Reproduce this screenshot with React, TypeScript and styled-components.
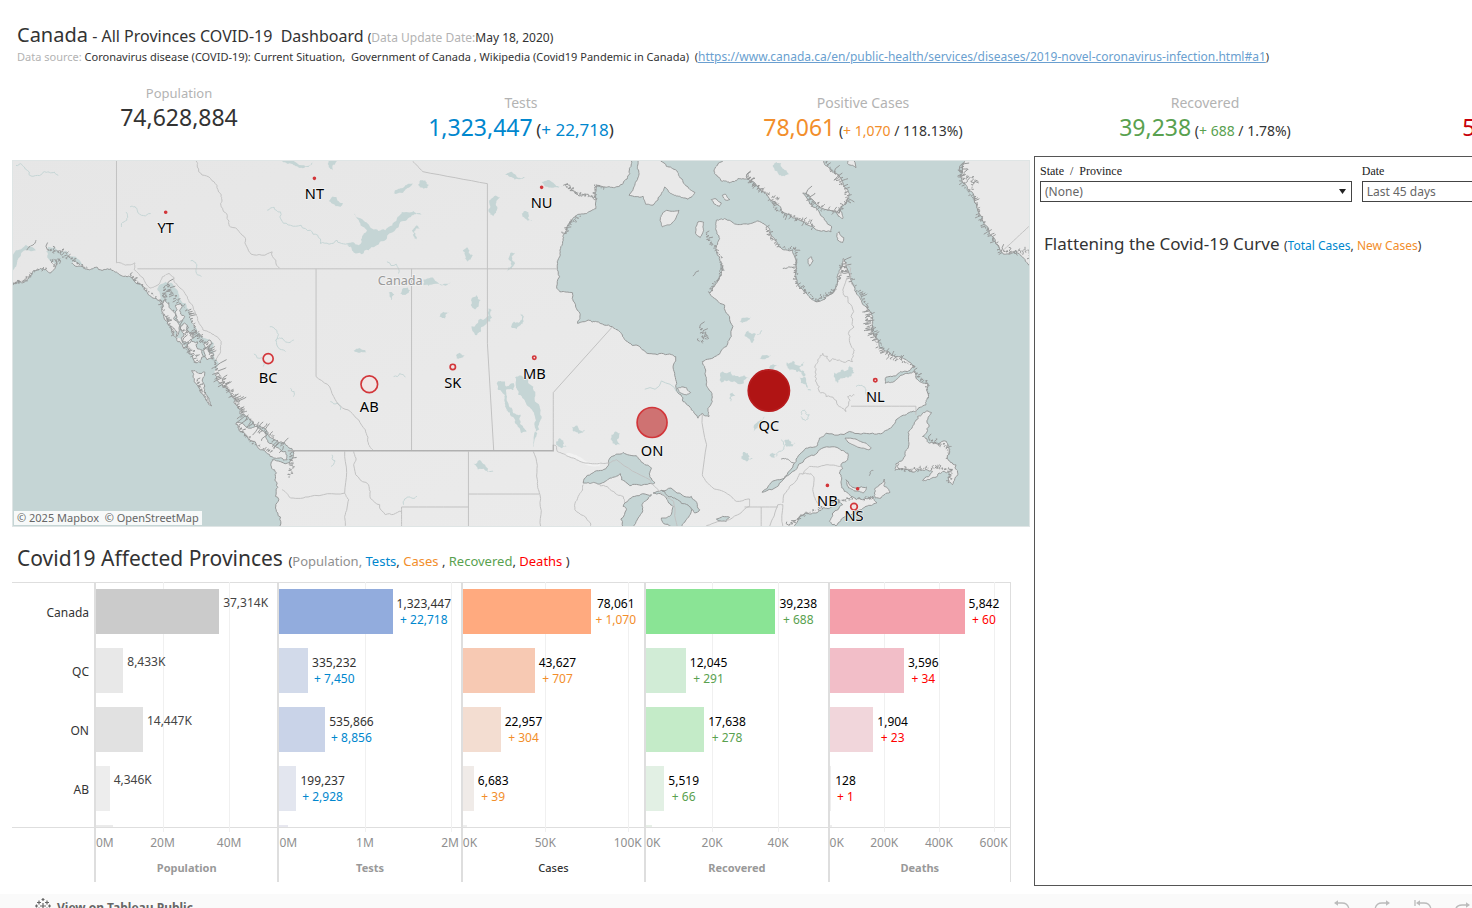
import React from "react";
import styled, { createGlobalStyle, css } from "styled-components";

const GlobalStyle = createGlobalStyle`
  *, *::before, *::after { box-sizing: border-box; }
  body {
    margin: 0;
    background: #fff;
    color: #333;
    font-family: "Noto Sans", "Open Sans", sans-serif;
    font-size: 12px;
  }
  h1, h2, p, dl, dd { margin: 0; font-weight: 400; }
`;

const palette = {
  text: "#333333",
  muted: "#b3b3b3",
  axis: "#8f8f8f",
  blue: "#0087ce",
  orange: "#f28e2b",
  green: "#59a14f",
  crimson: "#c8000a",
  red: "#ff0000",
  line: "#dedede",
  grid: "#f0f0f0",
};

const Page = styled.div`
  display: flex;
  flex-direction: column;
  height: 100vh;
  overflow: hidden;
`;

const Tint = styled.span<{ $color: string }>`
  color: ${(p) => p.$color};
`;

/* ---------- header ---------- */

const Header = styled.header`
  flex: none;
  padding: 24px 17px 0;
  white-space: nowrap;
`;

const Title = styled.h1`
  font-size: 16px;
  line-height: 22px;
  strong { font-size: 20px; font-weight: 400; }
  small { font-size: 12px; }
`;

const Source = styled.p`
  font-size: 11px;
  line-height: 16px;
  white-space: pre;
  a { font-size: 12px; color: #6a9fd0; }
`;

/* ---------- key figures ---------- */

const KpiRow = styled.dl`
  flex: none;
  display: grid;
  grid-template-columns: repeat(5, minmax(342px, 1fr));
  min-height: 62px;
  margin: 18px 8px 11px;
  white-space: nowrap;
`;

const Kpi = styled.div<{ $raised?: boolean }>`
  align-self: ${(p) => (p.$raised ? "start" : "end")};
  text-align: center;
  dt { font-size: ${(p) => (p.$raised ? 13 : 14)}px; line-height: 20px; color: ${palette.muted}; }
  dd { font-size: 14px; line-height: 28px; }
`;

const Figure = styled.span<{ $color: string }>`
  font-size: 23px;
  color: ${(p) => p.$color};
`;

const Medium = styled.span`
  font-size: 17px;
`;

/* ---------- main layout ---------- */

const Main = styled.main`
  flex: none;
  display: grid;
  grid-template-columns: minmax(0, 1018fr) minmax(0, 438fr);
  column-gap: 4px;
  padding-left: 12px;
`;

const Left = styled.div`
  min-width: 0;
  padding-bottom: 4px;
`;

const MapBox = styled.section`
  position: relative;
  margin-top: 4px;
  height: 367px;
  border: 1px solid #dfe5e5;
  overflow: hidden;
  svg { display: block; width: 100%; height: 100%; }
`;

const Credit = styled.div`
  position: absolute;
  left: 1px;
  bottom: 1px;
  padding: 0 3px;
  background: rgba(255, 255, 255, 0.85);
  color: #666;
  font-size: 11px;
  line-height: 14px;
  white-space: pre;
`;

/* ---------- right panel ---------- */

const Panel = styled.section`
  border: 1px solid #555;
  border-right: 0;
  padding: 6px 0 0 5px;
  min-width: 0;
  overflow: hidden;
`;

const Filters = styled.div`
  display: grid;
  grid-template-columns: minmax(0, 311fr) minmax(0, 110fr);
  column-gap: 10px;
`;

const Field = styled.div`
  label {
    display: block;
    font-family: "Liberation Serif", "Times New Roman", serif;
    font-size: 12px;
    line-height: 16px;
    margin-bottom: 2px;
    color: #222;
  }
`;

const control = css`
  display: block;
  width: 100%;
  height: 21px;
  padding: 0 4px;
  border: 1px solid #444;
  border-radius: 0;
  background: #fff;
  color: #666;
  font-family: inherit;
  font-size: 12px;
`;

const SelectWrap = styled.div`
  position: relative;
  svg { position: absolute; right: 6px; top: 8px; pointer-events: none; }
`;

const Select = styled.select`
  ${control}
  appearance: none;
`;

const DateInput = styled.input`
  ${control}
  border-right: 0;
`;

const CurveTitle = styled.h2`
  margin: 30px 4px 0;
  font-size: 17px;
  line-height: 24px;
  white-space: nowrap;
  small { font-size: 12px; }
`;

/* ---------- province chart ---------- */

const ChartTitle = styled.h2`
  margin: 18px 5px 8px;
  font-size: 21px;
  line-height: 26px;
  white-space: pre;
  small { font-size: 13px; }
`;

const Chart = styled.section`
  display: grid;
  grid-template-columns: 82px repeat(5, minmax(0, 1fr));
  margin-right: 19px;
`;

const plotArea = css`
  height: 246px;
  padding-top: 6px;
  border-top: 1px solid ${palette.line};
  border-bottom: 1px solid ${palette.line};
  overflow: hidden;
`;

const Names = styled.div`
  ${plotArea}
  text-align: right;
`;

const Name = styled.div`
  height: 59px;
  padding-right: 5px;
  font-size: 12px;
  line-height: 47px;
`;

const Column = styled.div`
  position: relative;
  border-left: 2px solid ${palette.line};
  &:last-child { border-right: 1px solid ${palette.line}; }
`;

const Plot = styled.div`
  ${plotArea}
`;

const GridLine = styled.i`
  position: absolute;
  top: 0;
  height: 250px;
  border-left: 1px solid ${palette.grid};
`;

const BarRow = styled.div`
  position: relative;
  display: flex;
  height: 59px;
`;

const Bar = styled.div<{ $color: string }>`
  flex: none;
  height: 45px;
  background: ${(p) => p.$color};
`;

const BarLabel = styled.div<{ $color: string; $faint?: boolean }>`
  padding: ${(p) => (p.$faint ? "6px 4px" : "7px 4px")};
  font-size: 12px;
  line-height: 16px;
  text-align: center;
  white-space: nowrap;
  color: ${(p) => p.$color};
`;

const Axis = styled.div`
  position: relative;
  height: 54px;
  padding-top: 30px;
  text-align: center;
  color: ${palette.axis};
`;

const Tick = styled.span<{ $side: "start" | "mid" | "end" }>`
  position: absolute;
  top: 6px;
  line-height: 18px;
  white-space: nowrap;
  transform: translateX(${(p) => (p.$side === "mid" ? "-50%" : p.$side === "end" ? "-100%" : "0")});
`;

const AxisTitle = styled.div<{ $plain?: boolean }>`
  font-size: 11px;
  line-height: 20px;
  font-weight: ${(p) => (p.$plain ? 500 : 700)};
  color: ${(p) => (p.$plain ? palette.text : "#999")};
`;

/* ---------- footer ---------- */

const Footer = styled.footer`
  flex: none;
  display: flex;
  justify-content: space-between;
  align-items: flex-start;
  height: 40px;
  margin-top: 8px;
  padding: 4px 0 0 35px;
  background: #fafafa;
`;

const FooterLink = styled.a`
  display: flex;
  gap: 6px;
  align-items: flex-start;
  color: #666;
  font-size: 12px;
  font-weight: 700;
  line-height: 20px;
  text-decoration: none;
`;

const Tools = styled.div`
  display: flex;
  gap: 20px;
`;

const ToolButton = styled.button`
  width: 20px;
  height: 18px;
  padding: 0;
  border: 0;
  background: none;
  color: #bbb;
  svg { display: block; }
`;

/* ---------- map drawing ---------- */

type Pt = [number, number];

const parse = (s: string): Pt[] =>
  s.trim().split(/\s+/).map((p) => p.split(",").map(Number) as Pt);

/* Adds natural roughness to a polyline by repeated midpoint displacement. */
function rough(points: string, amount: number, closed = true, depth = 3): string {
  let seed = 7;
  const rnd = () => {
    seed = (seed * 16807) % 2147483647;
    return seed / 2147483647 - 0.5;
  };
  let pts = parse(points);
  if (closed) pts = [...pts, pts[0]];
  for (let d = 0; d < depth; d++) {
    const next: Pt[] = [pts[0]];
    for (let i = 1; i < pts.length; i++) {
      const [ax, ay] = pts[i - 1];
      const [bx, by] = pts[i];
      const len = Math.hypot(bx - ax, by - ay);
      if (len > 5 && len < 220) {
        const k = rnd() * amount;
        next.push([(ax + bx) / 2 - (by - ay) * k, (ay + by) / 2 + (bx - ax) * k]);
      }
      next.push([bx, by]);
    }
    pts = next;
  }
  return "M" + pts.map((p) => p.map((v) => Math.round(v)).join(",")).join("L") + (closed ? "Z" : "");
}

/* Short inlets branching off a coast. */
function fjords(points: string, length: number, step = 4): string {
  let seed = 31;
  const rnd = () => {
    seed = (seed * 16807) % 2147483647;
    return seed / 2147483647;
  };
  const pts = parse(points);
  let d = "";
  for (let i = 1; i < pts.length; i++) {
    const [ax, ay] = pts[i - 1];
    const [bx, by] = pts[i];
    const len = Math.hypot(bx - ax, by - ay) || 1;
    const nx = -(by - ay) / len;
    const ny = (bx - ax) / len;
    for (let t = 0; t < len; t += step) {
      const x = ax + ((bx - ax) * t) / len;
      const y = ay + ((by - ay) * t) / len;
      const r = (rnd() - 0.5) * 2;
      const l = r * Math.abs(r) * length * 1.3;
      const w = (rnd() - 0.5) * 14;
      d += `M${x | 0},${y | 0}l${(nx * l * 0.6 + w) | 0},${(ny * l * 0.6) | 0}l${(nx * l * 0.4 - w) | 0},${(ny * l * 0.4 + w / 2) | 0}`;
    }
  }
  return d;
}

const pacific =
  "36,405 66,398 85,380 103,362 135,358 150,368 170,345 205,335 245,350 262,358 290,352 330,356 350,368 383,378 400,392 430,412 440,428 470,450 485,480 500,515 525,560 540,578 560,600 580,637 605,640 640,635 648,680 680,715 705,745 712,775 735,800 760,825 800,845 820,870 860,888 880,910 868,938 815,930 812,940 822,960 830,1000 835,1050 832,1090 828,1140 20,1140 20,405";
const northEast =
  "1895,10 1895,40 1890,70 1870,100 1845,112 1810,110 1790,105 1785,130 1790,148 1788,175 1760,190 1730,195 1710,215 1700,240 1690,255 1690,270 1680,310 1672,350 1670,410 1680,425 1718,428 1725,460 1740,490 1733,520 1765,510 1790,515 1838,530 1860,545 1878,572 1920,590 1960,612 2010,612 2028,620 2025,670 2030,720 2050,755 2075,780 2095,805 2108,790 2128,800 2125,775 2138,755 2128,720 2120,690 2118,660 2108,635 2150,618 2180,590 2195,560 2190,500 2175,465 2130,430 2150,400 2165,365 2170,355 2160,320 2150,300 2160,265 2148,235 2150,210 2175,205 2210,222 2245,222 2275,212 2310,235 2325,265 2340,290 2380,300 2390,330 2393,390 2398,410 2430,440 2450,455 2480,440 2500,430 2515,390 2520,360 2530,345 2532,325 2545,360 2560,400 2580,440 2610,480 2620,520 2622,550 2640,590 2690,620 2745,650 2715,664 2695,672 2660,682 2658,700 2680,697 2710,675 2745,665 2750,685 2785,700 2788,740 2780,765 2750,785 2720,795 2690,810 2665,840 2620,850 2550,845 2480,850 2460,865 2455,885 2420,895 2390,935 2360,980 2310,1005 2288,1028 2340,1000 2380,965 2420,925 2460,900 2520,897 2545,910 2540,935 2525,945 2530,955 2520,970 2525,1000 2535,1025 2555,1040 2590,1050 2620,1042 2632,1060 2600,1070 2570,1085 2540,1100 2510,1128 2490,1115 2500,1090 2530,1065 2520,1058 2500,1070 2470,1075 2440,1090 2400,1100 2370,1140 3110,1140 3110,10";

const islands: [string, number][] = [
  ["705,822 730,825 760,832 790,845 800,870 820,888 855,905 860,930 850,932 820,925 780,900 740,860 715,840", 0.5],
  ["573,662 590,668 612,666 605,690 610,715 625,745 633,768 615,750 600,728 580,695", 0.4],
  ["480,460 505,458 520,480 522,510 528,560 510,530 495,500", 0.7],
  ["525,465 545,470 552,500 535,518 525,490", 0.7],
  ["540,530 560,525 580,550 570,575 545,575", 0.7],
  ["560,585 590,575 605,600 600,638 580,630 565,610", 0.8],
  ["612,580 635,580 640,615 620,630 610,605", 0.8],
  ["1915,10 1915,40 1918,70 1905,105 1888,135 1930,138 1938,162 1960,165 1985,130 1995,110 2015,130 2040,138 2065,147 2086,127 2062,108 2040,80 2030,60 2000,48 1975,10", 0.25],
  ["2180,10 2155,40 2145,70 2165,92 2190,98 2215,85 2245,85 2270,105 2300,130 2330,160 2360,190 2400,210 2440,228 2495,245 2497,230 2470,200 2430,160 2410,128 2440,150 2470,175 2510,185 2530,205 2520,180 2540,160 2550,130 2535,110 2520,80 2495,60 2475,40 2460,10", 0.35],
  ["2535,10 2545,40 2560,45 2570,52 2565,10", 0.3],
  ["1985,195 2000,180 2038,180 2030,200 2012,223 1988,230 1981,210", 0.2],
  ["2095,215 2112,216 2112,240 2102,262 2088,250 2088,232", 0.15],
  ["2135,148 2150,146 2165,158 2160,168 2145,162", 0.2],
  ["2168,135 2178,132 2191,148 2178,150", 0.2],
  ["2425,328 2436,320 2441,332 2430,348", 0.2],
  ["2512,258 2520,245 2533,262 2530,277 2515,270", 0.4],
  ["2537,865 2570,868 2600,880 2616,895 2608,900 2575,892 2550,880", 0.1],
  ["2540,990 2550,1005 2570,1015 2602,1012 2592,1030 2570,1024 2548,1015", 0.3],
  ["2625,1030 2640,1005 2655,988 2655,1010 2672,1028 2645,1045 2628,1045", 0.4],
  ["2770,790 2797,788 2790,830 2770,860 2790,880 2842,875 2852,900 2843,925 2870,945 2876,970 2860,1005 2848,995 2850,968 2820,970 2790,990 2770,992 2800,965 2760,960 2720,958 2688,962 2690,942 2718,905 2728,870 2740,830 2755,800", 0.45],
  ["2033,715 2060,713 2073,728 2060,735 2040,728", 0.2],
  ["2882,10 2890,60 2890,95 2910,120 2930,160 2950,200 2970,250 3000,290 3015,312 3050,300 3070,320 3100,350 3110,10", 0.4],
];

const coastDetail: [string, number][] = [
  ["36,402 66,392 103,362 135,358", 9],
  ["140,300 185,300 205,320 150,330 160,350", 16],
  ["205,320 260,356", 6],
  ["390,375 440,420 470,445", 6],
  ["490,410 500,440 480,460 500,515 522,555", 14],
  ["500,400 530,450 560,480 575,520 600,560 635,600", 18],
  ["545,575 575,600 595,635", 20],
  ["540,540 590,550 620,600 650,650", 20],
  ["590,690 630,765", 8],
  ["645,650 680,712 712,770 740,805 800,850 850,890", 30],
  ["665,690 705,740 725,790", 16],
  ["715,830 760,880 810,910", 9],
  ["870,910 880,940 868,985", 12],
  ["1700,250 1710,215 1745,195", 12],
  ["1700,110 1740,130 1790,145 1785,105 1815,110", 8],
  ["2240,80 2300,130 2330,180 2400,205 2450,230", 16],
  ["2245,75 2275,110 2335,150", 10],
  ["2420,130 2470,175 2520,190 2545,140 2520,80 2475,35", 22],
  ["2890,40 2890,95 2930,160 2960,230 3010,308", 16],
  ["2880,60 2930,90 2910,130", 20],
  ["3015,305 3090,300 3090,335", 16],
  ["2300,235 2340,290 2388,300 2393,400 2450,450 2505,425 2532,340", 10],
  ["2535,330 2560,400 2610,480 2620,540 2660,610 2745,650", 18],
  ["2600,500 2620,550 2640,600", 22],
  ["2120,250 2165,320 2160,380 2130,430", 9],
  ["2745,665 2785,700 2788,750", 10],
  ["2700,960 2780,955 2860,960 2850,1000", 13],
  ["2790,870 2850,890 2845,930", 13],
  ["2370,1128 2410,1095 2470,1075", 10],
  ["2500,1060 2550,1045 2620,1050", 10],
  ["2100,530 2125,560 2100,575", 16],
];

const lakes: [string, number][] = [
  ["30,345 45,300 75,284 105,300 72,300 52,325 45,350 30,365", 0.3],
  ["135,305 160,290 195,300 205,320 245,345 180,350 150,335", 0.6],
  ["1042,280 1075,285 1085,260 1100,240 1070,205 1060,190 1095,215 1115,235 1155,240 1190,205 1205,185 1240,182 1265,192 1235,195 1200,215 1160,265 1130,285 1105,300 1060,307", 0.4],
  ["1180,130 1195,115 1215,105 1237,98 1225,112 1210,125 1190,130", 0.4],
  ["1253,103 1275,90 1290,103 1270,115", 0.6],
  ["1468,150 1500,142 1492,175 1480,198 1466,185", 0.5],
  ["1515,72 1545,72 1575,80 1560,87 1530,80", 0.5],
  ["1565,190 1585,185 1597,212 1575,205", 0.6],
  ["1625,95 1660,97 1690,107 1660,112 1635,108", 0.4],
  ["1388,300 1408,300 1418,315 1402,335 1395,315", 0.7],
  ["1525,325 1545,308 1545,340 1520,365 1535,345", 0.6],
  ["1235,240 1260,235 1245,255 1250,268 1240,258", 0.8],
  ["1270,388 1310,395 1352,398 1300,402 1270,405", 0.5],
  ["1200,430 1222,412 1230,420 1215,435", 0.5],
  ["1165,428 1182,432 1175,450", 0.5],
  ["1412,465 1430,435 1442,450 1425,478", 0.5],
  ["1318,500 1347,485 1335,505", 0.5],
  ["1425,555 1435,510 1465,475 1475,480 1460,520 1442,545", 0.7],
  ["1533,530 1560,515 1560,490 1572,500 1562,525 1550,538", 0.6],
  ["1060,602 1095,600 1098,607", 0.4],
  ["1368,625 1378,608 1395,615 1380,625", 0.5],
  ["1545,682 1580,685 1600,710 1605,755 1625,800 1618,840 1607,845 1605,800 1580,765 1555,735 1547,705", 0.4],
  ["1490,700 1515,695 1520,710 1542,700 1540,720 1518,720 1525,760 1540,790 1562,795 1560,820 1580,845 1565,850 1545,820 1530,790 1515,770 1515,735 1495,720", 0.4],
  ["1605,845 1612,850 1602,890 1600,890", 0.2],
  ["1715,830 1740,842 1755,840 1735,852", 0.7],
  ["1835,855 1860,850 1862,885 1838,880", 0.6],
  ["1668,875 1690,872 1700,890 1675,890", 0.8],
  ["1420,942 1455,945 1480,965 1455,962", 0.7],
  ["845,32 905,45 940,32 925,50 890,48 860,40", 0.5],
  ["985,32 1010,32 998,60 985,50", 0.5],
  ["985,152 1008,140 1028,160 1020,170 995,160", 0.4],
  ["2220,515 2240,502 2255,500 2240,515", 0.5],
  ["2235,555 2262,550 2288,540 2265,560 2255,578 2245,565", 0.8],
  ["2280,625 2300,615 2315,615 2295,628", 0.4],
  ["2160,690 2195,665 2215,678 2250,685 2210,698 2165,698", 0.7],
  ["2365,655 2380,632 2415,635 2400,655 2415,680 2390,665", 0.9],
  ["2400,680 2422,700 2435,722 2420,710", 0.7],
  ["2508,690 2525,660 2550,645 2565,668 2540,680 2515,700", 0.8],
  ["2190,735 2207,735 2195,755", 0.8],
  ["2225,920 2245,910 2260,928 2230,930", 0.8],
  ["2355,885 2368,868 2388,880 2370,890", 0.8],
  ["2310,918 2330,912 2325,925", 0.6],
  ["2262,845 2275,815 2295,800 2280,820", 0.4],
  ["2308,655 2338,645 2320,660", 0.5],
];

const shoreLakes: [string, number][] = [
  ["1750,1000 1785,965 1825,948 1830,925 1870,908 1910,918 1930,940 1955,955 1950,980 1965,1000 1930,1005 1890,1008 1865,990 1862,972 1830,985 1800,1003 1775,1000", 0.3],
  ["1870,1140 1880,1080 1870,1070 1905,1040 1955,1035 1945,1048 1930,1060 1922,1095 1905,1140", 0.4],
  ["1960,1030 2000,1045 2020,1070 2010,1100 1985,1105 1992,1122 2040,1140 2060,1110 2078,1075 2050,1050 2020,1030 1985,1022", 0.3],
  ["1985,1022 2040,1030 2075,1040 2100,1080 2085,1090 2055,1062 2020,1045", 0.4],
  ["2150,1108 2190,1103 2180,1115 2155,1112", 0.3],
];

const borders: [string, number][] = [
  ["347,30 347,338 375,345 402,338 400,358 448,414 475,402 485,380 505,370 520,382 520,395 550,425 575,465 590,500 607,540 650,560 662,575 660,605 645,630", 0.2],
  ["585,30 590,50 630,85 660,130 660,160 680,195 690,230 735,265 752,312 815,305 838,355", 0.4],
  ["410,356 838,356 1250,356 1670,356", 0],
  ["947,356 947,680 1000,740 1050,785 1095,840 1105,885 1118,902", 0.25],
  ["1234,356 1234,903", 0],
  ["1237,32 1268,64 1462,100 1462,580 1481,903", 0],
  ["1838,530 1660,728 1660,885", 0],
  ["1660,885 1670,890 1672,905 1700,918 1740,935 1790,942 1825,940 1850,930 1950,990 1965,1010 1985,1030 2022,1055 2032,1140", 0.15],
  ["1033,905 1033,1030 1045,1050 1033,1100 1035,1131", 0.1],
  ["845,1020 870,1045 930,1040 1033,1030", 0.15],
  ["1060,905 1060,945 1105,1005 1110,1045 1155,1095 1204,1085", 0.35],
  ["1204,1131 1204,1072 1405,1072", 0],
  ["1405,905 1405,1131", 0],
  ["1405,1033 1618,1033", 0],
  ["1600,905 1612,990 1620,1035 1622,1131", 0.15],
  ["1750,1005 1738,1035 1725,1080 1772,1120 1772,1131", 0.25],
  ["1800,1008 1840,1025 1870,1040 1875,1060", 0.3],
  ["2108,795 2108,975 2140,1015 2180,1030 2210,1055 2250,1048 2250,1070 2190,1110 2120,1128", 0.15],
  ["2235,1072 2335,1072", 0],
  ["2285,1072 2285,1131", 0],
  ["2350,1131 2350,1065 2335,1065 2310,1131", 0.1],
  ["2350,1060 2370,1010 2400,972 2435,972 2444,985 2444,1040 2465,1080", 0.25],
  ["2410,975 2430,950 2480,945 2525,950", 0.2],
  ["2532,340 2530,420 2545,440 2555,500 2552,560 2565,600 2560,635 2520,630 2490,635 2470,610 2455,630 2450,660 2460,710 2480,740 2520,770 2540,785 2545,740 2565,735", 0.6],
  ["2555,769 2750,769 2750,795", 0],
  ["3015,298 3090,228", 0],
];

const rivers: string[] = [
  "45,45 70,50 110,75 145,65 172,75",
  "388,170 410,182 450,190",
  "375,185 370,215 362,230",
  "800,180 840,185 870,225 930,240 960,280 1010,270 1050,290",
  "808,530 830,565 855,605",
  "825,572 850,570 880,570",
  "570,332 588,352 602,380",
  "760,612 788,650",
  "870,715 878,740",
  "990,755 1020,780",
  "995,915 992,950",
  "1210,1065 1230,1042 1250,1040",
  "1160,335 1195,370",
  "1180,680 1215,682",
  "1935,718 2030,725",
  "2345,870 2345,905 2330,920",
  "2405,795 2415,780 2430,795 2418,812 2405,800",
  "2570,710 2600,720 2620,745",
];

const markers: { x: number; y: number; r: number; fill: string; name?: string; ly?: number }[] = [
  { x: 495, y: 186, r: 3, fill: "#d8383c", name: "YT", ly: 247 },
  { x: 942, y: 84, r: 3, fill: "#d8383c", name: "NT", ly: 145 },
  { x: 1625, y: 111, r: 3, fill: "#d8383c", name: "NU", ly: 173 },
  { x: 803, y: 626, r: 15, fill: "#f1e8e8", name: "BC", ly: 700 },
  { x: 1107, y: 703, r: 25, fill: "#f1e5e5", name: "AB", ly: 786 },
  { x: 1358, y: 651, r: 8, fill: "#f0e4e4", name: "SK", ly: 715 },
  { x: 1603, y: 623, r: 5, fill: "#f0e4e4", name: "MB", ly: 687 },
  { x: 1957, y: 818, r: 45, fill: "#cf7272", name: "ON", ly: 920 },
  { x: 2308, y: 722, r: 62, fill: "#b01414", name: "QC", ly: 843 },
  { x: 2628, y: 691, r: 5, fill: "#f0e4e4", name: "NL", ly: 756 },
  { x: 2484, y: 1007, r: 3, fill: "#d8383c", name: "NB", ly: 1069 },
  { x: 2575, y: 1017, r: 3, fill: "#d8383c" },
  { x: 2564, y: 1071, r: 10, fill: "#f0e4e4", name: "NS", ly: 1113 },
];

const WATER = "#c5d5d5";
const LAND = "#e9e9e9";
const SHORE = "#979999";

const CanadaMap = () => (
  <svg viewBox="36 30 3054 1101" preserveAspectRatio="xMidYMid slice" role="img" aria-label="Cases by province">
    <defs>
      <linearGradient id="relief" x1="0" y1="0" x2="1" y2="1">
        <stop offset="0" stopColor="#e6e6e6" />
        <stop offset="0.5" stopColor="#e9e9e9" />
        <stop offset="1" stopColor="#ececec" />
      </linearGradient>
    </defs>
    <rect x="0" y="0" width="3130" height="1160" fill="url(#relief)" />
    <path d={rough("1700,915 1750,935 1800,945", 0.2, false)} fill="none" stroke="#f2f2f2" strokeWidth="10" />
    <g stroke={SHORE} strokeWidth="3" fill={WATER} strokeLinejoin="round">
      <path d={rough(pacific, 0.5)} />
      <path d={rough(northEast, 0.3)} />
      {shoreLakes.map(([p, a]) => <path key={p} d={rough(p, a)} />)}
    </g>
    <g fill={WATER} stroke="none">
      <path d={rough("470,420 495,395 515,400 540,450 565,480 575,515 605,560 640,580 655,640 640,690 600,650 560,600 520,550 495,480", 0.4)} />
      {lakes.map(([p, a]) => <path key={p} d={rough(p, a)} />)}
    </g>
    <g fill="none" stroke={WATER} strokeWidth="3">
      {rivers.map((p) => <path key={p} d={rough(p, 0.6, false)} />)}
    </g>
    <g stroke={SHORE} strokeWidth="3" fill={LAND} strokeLinejoin="round">
      {islands.map(([p, a]) => <path key={p} d={rough(p, a)} />)}
    </g>
    <path d={rough("2320,45 2345,38 2350,55 2370,72 2340,75 2325,60", 0.5)} fill={WATER} />
    <g fill="none" stroke={SHORE} strokeWidth="3">
      {coastDetail.map(([p, l]) => <path key={p} d={fjords(p, l)} />)}
      <path d={rough("1690,105 1720,122 1760,132 1788,148", 0.6, false)} />
      <path d={rough("2345,928 2370,932 2385,940", 0.3, false)} />
      <path d={rough("2350,355 2385,355", 0.3, false)} />
      <path d={rough("78,300 95,285 105,270", 0.3, false)} />
      <path d={rough("2080,378 2098,362", 0.3, false)} />
      <path d={rough("2610,978 2622,962", 0.5, false)} />
    </g>
    <g fill="none" stroke="#c2c2c2" strokeWidth="3">
      {borders.map(([p, a]) => <path key={p} d={rough(p, a, false)} />)}
    </g>
    <path d="M862,903H1660V885" fill="none" stroke="#b0b0b0" strokeWidth="4" />
    <text x="1200" y="405" textAnchor="middle" fontSize="38" fill="#999" stroke="#f0f0f0" strokeWidth="6" paintOrder="stroke">Canada</text>
    {markers.map((m) => (
      <g key={m.x}>
        <circle cx={m.x} cy={m.y} r={m.r} fill={m.fill} stroke={m.r > 60 ? "#b81c1e" : "#d2363a"} strokeWidth="5" />
        {m.name && (
          <text x={m.x} y={m.ly} textAnchor="middle" fontSize="44" fill="#000" stroke="#f4f4f4" strokeWidth="4" paintOrder="stroke">
            {m.name}
          </text>
        )}
      </g>
    ))}
  </svg>
);

/* ---------- chart data ---------- */

interface Series {
  title: string;
  max: number;
  ticks: [string, number][];
  plain?: boolean;
  labelColor: string;
  deltaColor: string;
  bars: { size: number; color: string; value?: string; delta?: string }[];
}

const provinces = ["Canada", "QC", "ON", "AB"];

const series: Series[] = [
  {
    title: "Population", max: 54.5, ticks: [["0M", 0], ["20M", 20], ["40M", 40]],
    labelColor: "#444", deltaColor: "#444",
    bars: [
      { size: 37, color: "#cbcbcb", value: "37,314K" },
      { size: 8.2, color: "#e8e8e8", value: "8,433K" },
      { size: 14.1, color: "#e1e1e1", value: "14,447K" },
      { size: 4.1, color: "#ededed", value: "4,346K" },
      { size: 5, color: "#ebebeb" },
    ],
  },
  {
    title: "Tests", max: 2.12, ticks: [["0M", 0], ["1M", 1], ["2M", 2]],
    labelColor: "#333", deltaColor: palette.blue,
    bars: [
      { size: 1.323, color: "#92acdd", value: "1,323,447", delta: "+ 22,718" },
      { size: 0.335, color: "#d2daea", value: "335,232", delta: "+ 7,450" },
      { size: 0.536, color: "#c9d3e8", value: "535,866", delta: "+ 8,856" },
      { size: 0.199, color: "#e3e6ef", value: "199,237", delta: "+ 2,928" },
      { size: 0.1, color: "#e8e8f0" },
    ],
  },
  {
    title: "Cases", max: 110, plain: true, ticks: [["0K", 0], ["50K", 50], ["100K", 100]],
    labelColor: "#000", deltaColor: palette.orange,
    bars: [
      { size: 78, color: "#ffaa7f", value: "78,061", delta: "+ 1,070" },
      { size: 43.6, color: "#f7c9b3", value: "43,627", delta: "+ 707" },
      { size: 23, color: "#f3ddd1", value: "22,957", delta: "+ 304" },
      { size: 6.7, color: "#f0ebe8", value: "6,683", delta: "+ 39" },
      { size: 2.5, color: "#eeeeee" },
    ],
  },
  {
    title: "Recovered", max: 55, ticks: [["0K", 0], ["20K", 20], ["40K", 40]],
    labelColor: "#000", deltaColor: palette.green,
    bars: [
      { size: 39.2, color: "#8ae495", value: "39,238", delta: "+ 688" },
      { size: 12, color: "#d1ecd6", value: "12,045", delta: "+ 291" },
      { size: 17.6, color: "#c4ebc8", value: "17,638", delta: "+ 278" },
      { size: 5.5, color: "#e2f0e4", value: "5,519", delta: "+ 66" },
      { size: 1.8, color: "#e8f0e8" },
    ],
  },
  {
    title: "Deaths", max: 660, ticks: [["0K", 0], ["200K", 200], ["400K", 400], ["600K", 600]],
    labelColor: "#000", deltaColor: palette.red,
    bars: [
      { size: 494, color: "#f4a0ab", value: "5,842", delta: "+ 60" },
      { size: 272, color: "#f2bec8", value: "3,596", delta: "+ 34" },
      { size: 160, color: "#f1d6db", value: "1,904", delta: "+ 23" },
      { size: 6, color: "#eeeeee", value: "128", delta: "+ 1" },
      { size: 8, color: "#eeeeee" },
    ],
  },
];

const share = (v: number, max: number) => `${(v / max) * 100}%`;

const SeriesColumn = ({ s }: { s: Series }) => (
  <Column>
    {s.ticks.slice(1).map(([t, v]) => <GridLine key={t} style={{ left: share(v, s.max) }} />)}
    <Plot>
      {s.bars.map((b, i) => (
        <BarRow key={i}>
          <Bar $color={b.color} style={{ width: share(b.size, s.max) }} />
          {b.value && (
            <BarLabel $color={s.labelColor} $faint={!b.delta}>
              {b.value}
              {b.delta && <div><Tint $color={s.deltaColor}>{b.delta}</Tint></div>}
            </BarLabel>
          )}
        </BarRow>
      ))}
    </Plot>
    <Axis>
      {s.ticks.map(([t, v]) => (
        <Tick key={t} $side={v === 0 ? "start" : t === "2M" ? "end" : "mid"} style={{ left: t === "2M" ? "99%" : share(v, s.max) }}>
          {t}
        </Tick>
      ))}
      <AxisTitle $plain={s.plain}>{s.title}</AxisTitle>
    </Axis>
  </Column>
);

/* ---------- footer icons ---------- */

const Spark = () => (
  <svg width="16" height="16" viewBox="0 0 16 16" stroke="#666" strokeWidth="1.2" fill="none">
    <path d="M8 5v6M5 8h6M8 0v3M6.500 1.500h3M8 13v3M6.500 14.500h3M4 2.500v4M2 4.500h4M12 2.500v4M10 4.500h4M4 9.500v4M2 11.500h4M12 9.500v4M10 11.500h4M1.500 6.500v3M0 8h3M14.500 6.500v3M13 8h3" />
  </svg>
);

const Arrow = ({ flip, bar, low }: { flip?: boolean; bar?: boolean; low?: boolean }) => (
  <svg width="20" height="18" viewBox="0 0 20 18" fill="none" stroke="currentColor" strokeWidth="1.3">
    <g transform={`translate(${flip ? 20 : bar ? 2 : 0} ${low ? 2 : 0}) scale(${flip ? -1 : 1} 1)`}>
      <path d="M5 5h5q6.500 0 7 7v4" />
      <path d="M6 2.200v5.600L2 5z" fill="currentColor" stroke="none" />
      {bar && <path d="M1 2v6" />}
    </g>
  </svg>
);

/* ---------- page ---------- */

export default function App() {
  return (
    <>
      <GlobalStyle />
      <Page>
        <Header>
          <Title>
            <strong>Canada</strong> - All Provinces COVID-19 &nbsp;Dashboard{" "}
            <small>(<Tint $color={palette.muted}>Data Update Date:</Tint>May 18, 2020)</small>
          </Title>
          <Source>
            <Tint $color={palette.muted}>Data source: </Tint>
            {"Coronavirus disease (COVID-19): Current Situation,  Government of Canada , Wikipedia (Covid19 Pandemic in Canada)  ("}
            <a href="https://www.canada.ca/en/public-health/services/diseases/2019-novel-coronavirus-infection.html#a1">
              https://www.canada.ca/en/public-health/services/diseases/2019-novel-coronavirus-infection.html#a1
            </a>
            )
          </Source>
        </Header>

        <KpiRow>
          <Kpi $raised>
            <dt>Population</dt>
            <dd><Figure $color={palette.text}>74,628,884</Figure></dd>
          </Kpi>
          <Kpi>
            <dt>Tests</dt>
            <dd><Figure $color={palette.blue}>1,323,447</Figure> <Medium>(<Tint $color={palette.blue}>+ 22,718</Tint>)</Medium></dd>
          </Kpi>
          <Kpi>
            <dt>Positive Cases</dt>
            <dd><Figure $color={palette.orange}>78,061</Figure> (<Tint $color={palette.orange}>+ 1,070</Tint> / 118.13%)</dd>
          </Kpi>
          <Kpi>
            <dt>Recovered</dt>
            <dd><Figure $color={palette.green}>39,238</Figure> (<Tint $color={palette.green}>+ 688</Tint> / 1.78%)</dd>
          </Kpi>
          <Kpi>
            <dt>Deaths</dt>
            <dd><Figure $color={palette.crimson}>5,842</Figure> <Medium>(<Tint $color={palette.crimson}>+ 60</Tint> / 1.04%)</Medium></dd>
          </Kpi>
        </KpiRow>

        <Main>
          <Left>
            <MapBox>
              <CanadaMap />
              <Credit>{"© 2025 Mapbox  © OpenStreetMap"}</Credit>
            </MapBox>

            <ChartTitle>
              Covid19 Affected Provinces{" "}
              <small>
                (<Tint $color="#8f8f8f">Population, </Tint>
                <Tint $color={palette.blue}>Tests</Tint>, <Tint $color={palette.orange}>Cases</Tint>
                {" , "}<Tint $color={palette.green}>Recovered</Tint>, <Tint $color={palette.red}>Deaths</Tint>{" )"}
              </small>
            </ChartTitle>

            <Chart>
              <Names>{provinces.map((p) => <Name key={p}>{p}</Name>)}</Names>
              {series.map((s) => <SeriesColumn key={s.title} s={s} />)}
            </Chart>
          </Left>

          <Panel>
            <Filters>
              <Field>
                <label htmlFor="province">State&nbsp; / &nbsp;Province</label>
                <SelectWrap>
                  <Select id="province" defaultValue="none">
                    <option value="none">(None)</option>
                  </Select>
                  <svg width="7" height="5" viewBox="0 0 7 5"><path d="M0 0h7L3.500 5z" fill="#222" /></svg>
                </SelectWrap>
              </Field>
              <Field>
                <label htmlFor="date">Date</label>
                <DateInput id="date" defaultValue="Last 45 days" />
              </Field>
            </Filters>
            <CurveTitle>
              Flattening the Covid-19 Curve{" "}
              <small>(<Tint $color={palette.blue}>Total Cases</Tint>, <Tint $color={palette.orange}>New Cases</Tint>)</small>
            </CurveTitle>
          </Panel>
        </Main>

        <Footer>
          <FooterLink href="#"><Spark />View on Tableau Public</FooterLink>
          <Tools>
            <ToolButton aria-label="Undo"><Arrow /></ToolButton>
            <ToolButton aria-label="Redo"><Arrow flip /></ToolButton>
            <ToolButton aria-label="Revert"><Arrow bar /></ToolButton>
            <ToolButton aria-label="Refresh"><Arrow flip low /></ToolButton>
          </Tools>
        </Footer>
      </Page>
    </>
  );
}
